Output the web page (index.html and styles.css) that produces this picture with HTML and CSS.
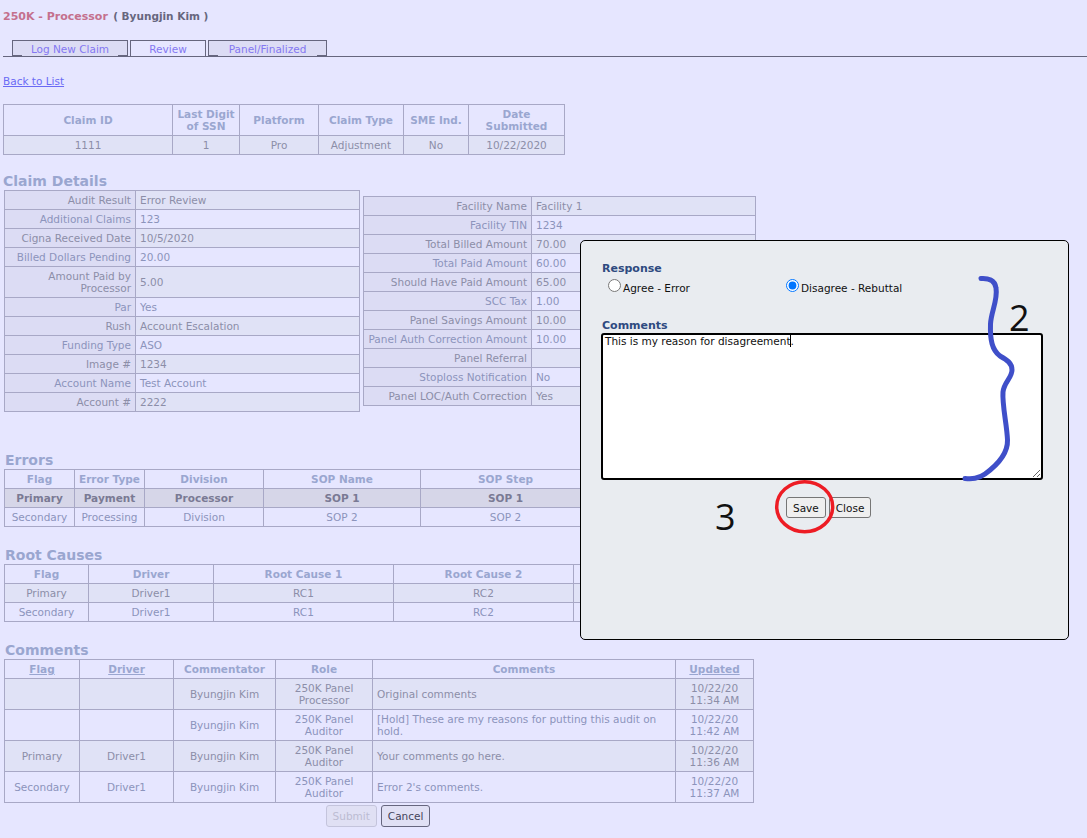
FILE: index.html
```html
<!DOCTYPE html>
<html lang="en">
<head>
    <meta charset="UTF-8">
    <title>250K - Processor</title>
    <link rel="stylesheet" href="styles.css">
</head>
<body>

    <div class="page-title">
        <span class="app-name">250K - Processor</span>
        <span class="user-name">( Byungjin Kim )</span>
    </div>

    <!-- Tabs -->
    <div class="tabs">
        <a class="tab tab-log" href="#"><span>Log New Claim</span></a>
        <a class="tab tab-review active" href="#"><span>Review</span></a>
        <a class="tab tab-panel" href="#"><span>Panel/Finalized</span></a>
    </div>

    <a class="back-link" href="#">Back to List</a>

    <!-- Summary -->
    <table class="grid summary">
        <colgroup>
            <col class="s1"><col class="s2"><col class="s3"><col class="s4"><col class="s5"><col class="s6">
        </colgroup>
        <tr class="head-tall">
            <th>Claim ID</th><th>Last Digit<br>of SSN</th><th>Platform</th><th>Claim Type</th><th>SME Ind.</th><th>Date<br>Submitted</th>
        </tr>
        <tr class="alt">
            <td>1111</td><td>1</td><td>Pro</td><td>Adjustment</td><td>No</td><td>10/22/2020</td>
        </tr>
    </table>

    <h2 class="section-title details-title">Claim Details</h2>
    <div class="details">
        <table class="grid form-table left-form">
            <colgroup><col class="fl1"><col class="fl2"></colgroup>
            <tr class="alt"><th>Audit Result</th><td>Error Review</td></tr>
            <tr><th>Additional Claims</th><td>123</td></tr>
            <tr class="alt"><th>Cigna Received Date</th><td>10/5/2020</td></tr>
            <tr><th>Billed Dollars Pending</th><td>20.00</td></tr>
            <tr class="alt"><th>Amount Paid by Processor</th><td>5.00</td></tr>
            <tr><th>Par</th><td>Yes</td></tr>
            <tr class="alt"><th>Rush</th><td>Account Escalation</td></tr>
            <tr><th>Funding Type</th><td>ASO</td></tr>
            <tr class="alt"><th>Image #</th><td>1234</td></tr>
            <tr><th>Account Name</th><td>Test Account</td></tr>
            <tr class="alt"><th>Account #</th><td>2222</td></tr>
        </table>
        <table class="grid form-table right-form">
            <colgroup><col class="fr1"><col class="fr2"></colgroup>
            <tr class="alt"><th>Facility Name</th><td>Facility 1</td></tr>
            <tr><th>Facility TIN</th><td>1234</td></tr>
            <tr class="alt"><th>Total Billed Amount</th><td>70.00</td></tr>
            <tr><th>Total Paid Amount</th><td>60.00</td></tr>
            <tr class="alt"><th>Should Have Paid Amount</th><td>65.00</td></tr>
            <tr><th>SCC Tax</th><td>1.00</td></tr>
            <tr class="alt"><th>Panel Savings Amount</th><td>10.00</td></tr>
            <tr><th>Panel Auth Correction Amount</th><td>10.00</td></tr>
            <tr class="alt"><th>Panel Referral</th><td></td></tr>
            <tr><th>Stoploss Notification</th><td>No</td></tr>
            <tr class="alt"><th>Panel LOC/Auth Correction</th><td>Yes</td></tr>
        </table>
    </div>

    <h2 class="section-title errors-title">Errors</h2>
    <table class="grid errors">
        <colgroup>
            <col class="e1"><col class="e2"><col class="e3"><col class="e4"><col class="e5"><col class="e6">
        </colgroup>
        <tr><th>Flag</th><th>Error Type</th><th>Division</th><th>SOP Name</th><th>SOP Step</th><th>Amount</th></tr>
        <tr class="selected"><td>Primary</td><td>Payment</td><td>Processor</td><td>SOP 1</td><td>SOP 1</td><td>10.00</td></tr>
        <tr><td>Secondary</td><td>Processing</td><td>Division</td><td>SOP 2</td><td>SOP 2</td><td>5.00</td></tr>
    </table>

    <h2 class="section-title causes-title">Root Causes</h2>
    <table class="grid causes">
        <colgroup>
            <col class="r1"><col class="r2"><col class="r3"><col class="r4"><col class="r5">
        </colgroup>
        <tr><th>Flag</th><th>Driver</th><th>Root Cause 1</th><th>Root Cause 2</th><th>Root Cause 3</th></tr>
        <tr class="alt"><td>Primary</td><td>Driver1</td><td>RC1</td><td>RC2</td><td>RC3</td></tr>
        <tr><td>Secondary</td><td>Driver1</td><td>RC1</td><td>RC2</td><td>RC3</td></tr>
    </table>

    <h2 class="section-title comments-title">Comments</h2>
    <table class="grid comments">
        <colgroup>
            <col class="c1"><col class="c2"><col class="c3"><col class="c4"><col class="c5"><col class="c6">
        </colgroup>
        <tr class="comments-head">
            <th><a href="#">Flag</a></th><th><a href="#">Driver</a></th><th>Commentator</th><th>Role</th><th>Comments</th><th><a href="#">Updated</a></th>
        </tr>
        <tr class="alt">
            <td></td><td></td><td>Byungjin Kim</td><td>250K Panel<br>Processor</td><td class="text-cell">Original comments</td><td>10/22/20<br>11:34 AM</td>
        </tr>
        <tr>
            <td></td><td></td><td>Byungjin Kim</td><td>250K Panel<br>Auditor</td><td class="text-cell">[Hold] These are my reasons for putting this audit on hold.</td><td>10/22/20<br>11:42 AM</td>
        </tr>
        <tr class="alt">
            <td>Primary</td><td>Driver1</td><td>Byungjin Kim</td><td>250K Panel<br>Auditor</td><td class="text-cell">Your comments go here.</td><td>10/22/20<br>11:36 AM</td>
        </tr>
        <tr>
            <td>Secondary</td><td>Driver1</td><td>Byungjin Kim</td><td>250K Panel<br>Auditor</td><td class="text-cell">Error 2's comments.</td><td>10/22/20<br>11:37 AM</td>
        </tr>
    </table>

    <div class="page-actions">
        <button class="page-btn" disabled>Submit</button>
        <button class="page-btn">Cancel</button>
    </div>

    <!-- Response Modal -->
    <div class="modal">
        <div class="modal-label">Response</div>
        <div class="radio-row">
            <label class="radio-item"><input type="radio" name="response"> Agree - Error</label>
            <label class="radio-item"><input type="radio" name="response" checked> Disagree - Rebuttal</label>
        </div>
        <div class="modal-label comments-label">Comments</div>
        <textarea class="modal-text">This is my reason for disagreement.</textarea>
        <div class="modal-actions">
            <button class="modal-btn">Save</button>
            <button class="modal-btn">Close</button>
        </div>
    </div>

    <!-- Hand drawn markup on top of the screenshot -->
    <svg class="markup" width="1087" height="838" viewBox="0 0 1087 838">
        <path d="M790.5 335V347" stroke="#000" stroke-width="1" fill="none"/>
        <path d="M981 278.5C988 278 995 280 996 288C998 300 991 312 990.5 324C990 340 992 350 1000 356C1007 360 1012 363 1012 370C1012 378 1004 382 1003 392C1002 405 1007 425 1007.500 440C1008 455 996 466 985 474C978 479 972 479 965 478.500" stroke="#3f4fc9" stroke-width="5" stroke-linecap="round" fill="none"/>
        <ellipse cx="804.700" cy="506.700" rx="28" ry="25" stroke="#ed1c24" stroke-width="3.500" fill="none"/>
        <text class="markup-num" x="1009" y="331">2</text>
        <text class="markup-num" x="715" y="530">3</text>
    </svg>

</body>
</html>
```

FILE: styles.css
```css
html {
    overflow: hidden;
}

body {
    font-family: "DejaVu Sans", Verdana, sans-serif;
    font-size: 10.5px;
    margin: 0;
    padding: 0;
    height: 838px;
    position: relative;
    overflow: hidden;
    background-color: #e6e6ff;
    color: #8c8ea8;
}

/* Header */
.page-title {
    height: 30px;
    padding: 9px 0 0 3px;
    box-sizing: border-box;
    line-height: 14px;
}

.app-name {
    font-size: 11px;
    font-weight: bold;
    color: #c4708e;
}

.user-name {
    margin-left: 2px;
    font-weight: bold;
    color: #66667e;
}

/* Tabs */
.tabs {
    display: flex;
    gap: 2px;
    height: 16px;
    margin: 10px 0 0 3px;
    padding-left: 9px;
    border-bottom: 1px solid #66667e;
}

.tab {
    display: block;
    height: 16px;
    box-sizing: border-box;
    border: 1px solid #66667e;
    background-color: #dcdcf4;
    color: #8478f2;
    text-align: center;
    text-decoration: none;
    line-height: 16px;
}

.tab span {
    display: block;
    height: 15px;
    margin: 0 9px;
    background-color: #dcdcf4;
}

.tab-log {
    width: 116px;
}

.tab-review {
    width: 76px;
}

.tab-panel {
    width: 119px;
}

.tab.active {
    border-bottom: none;
}

.tab.active,
.tab.active span {
    background-color: #e6e6ff;
}

.back-link {
    display: block;
    margin: 17px 0 0 3px;
    width: 80px;
    white-space: nowrap;
    line-height: 14px;
    color: #6a6af5;
}

/* Tables */
.grid {
    border-collapse: collapse;
    table-layout: fixed;
}

.grid th,
.grid td {
    border: 1px solid #a8a8c6;
    padding: 3px 4px;
    height: 19px;
    line-height: 12px;
    text-align: center;
    font-weight: normal;
    box-sizing: border-box;
}

.grid th {
    font-weight: bold;
    color: #9aa6d0;
}

.grid th a {
    color: inherit;
}

.grid .alt {
    background-color: #e0e2f6;
}

.grid tr:not(.alt) td {
    color: #8c94bc;
}

.grid .selected {
    background-color: #d6d6e8;
}

.grid tr.selected td {
    font-weight: bold;
    color: #7a7a94;
}

.summary {
    margin: 16px 0 0 3px;
    width: 561px;
}

.summary .head-tall th {
    height: 31px;
}

.s1 { width: 169px; }
.s2 { width: 67px; }
.s3 { width: 79px; }
.s4 { width: 85px; }
.s5 { width: 65px; }
.s6 { width: 96px; }

.section-title {
    margin: 0 0 0 3px;
    font-size: 14px;
    line-height: 18px;
    font-weight: bold;
    color: #9aa6d0;
}

.details-title {
    margin-top: 17px;
}

.errors-title {
    margin: 39px 0 0 5px;
}

.causes-title {
    margin: 19px 0 0 5px;
}

.comments-title {
    margin: 19px 0 0 5px;
}

/* Claim details */
.details {
    display: flex;
    align-items: flex-start;
    gap: 3px;
    margin: 0 0 0 4px;
}

.form-table th {
    font-weight: normal;
    text-align: right;
    background-color: #dcdcf4;
    color: #8c94bc;
}

.form-table .alt th {
    color: #8c8ea8;
}

.form-table td {
    text-align: left;
}

.left-form {
    width: 355px;
}

.fl1 { width: 131px; }
.fl2 { width: 224px; }

.right-form {
    width: 392px;
    margin-top: 6px;
}

.fr1 { width: 168px; }
.fr2 { width: 224px; }

.errors {
    margin-left: 4px;
    width: 749px;
}

.e1 { width: 70px; }
.e2 { width: 70px; }
.e3 { width: 119px; }
.e4 { width: 157px; }
.e5 { width: 170px; }
.e6 { width: 163px; }

.causes {
    margin-left: 4px;
    width: 749px;
}

.r1 { width: 84px; }
.r2 { width: 125px; }
.r3 { width: 180px; }
.r4 { width: 180px; }
.r5 { width: 180px; }

.comments {
    margin-left: 4px;
    width: 749px;
}

.c1 { width: 75px; }
.c2 { width: 94px; }
.c3 { width: 102px; }
.c4 { width: 97px; }
.c5 { width: 303px; }
.c6 { width: 78px; }

.comments td {
    height: 31px;
}

.grid .text-cell {
    text-align: left;
}

.page-actions {
    display: flex;
    justify-content: center;
    gap: 4px;
    width: 756px;
    margin-top: 2px;
}

.page-btn {
    font-family: inherit;
    font-size: 10.5px;
    height: 22px;
    padding: 0 6px;
    background-color: #e0e0f4;
    border: 1px solid #66667e;
    border-radius: 3px;
    color: #44445a;
}

.page-btn:disabled {
    border-color: #c4c4dc;
    color: #bcbcd2;
}

/* Modal */
.modal {
    position: absolute;
    left: 580px;
    top: 240px;
    width: 489px;
    height: 400px;
    box-sizing: border-box;
    padding: 21px 25px 0 21px;
    background-color: #e9ecf0;
    border: 1px solid #000;
    border-radius: 5px;
    color: #111;
}

.modal-label {
    font-size: 11px;
    font-weight: bold;
    line-height: 13px;
    color: #2e4a80;
}

.radio-row {
    display: flex;
    margin: 6px 0 0 6px;
}

.radio-item {
    display: flex;
    align-items: center;
    width: 178px;
    line-height: 14px;
}

.radio-item input {
    margin: 0 2px 0 0;
    position: relative;
    top: -3px;
}

.comments-label {
    margin-top: 24px;
}

.modal-text {
    display: block;
    width: 442px;
    height: 147px;
    box-sizing: border-box;
    margin: 1px 0 0 -1px;
    padding: 0 2px;
    border: 2px solid #000;
    border-radius: 3px;
    background-color: #fff;
    font-family: inherit;
    font-size: 10.5px;
    line-height: 13px;
    color: #111;
    outline: none;
}

.modal-actions {
    display: flex;
    gap: 3px;
    margin: 17px 0 0 184px;
}

.modal-btn {
    font-family: inherit;
    font-size: 10.5px;
    height: 21px;
    padding: 0 6px;
    background-color: #efefef;
    border: 1px solid #767676;
    border-radius: 3px;
    color: #111;
}

/* Markup layer */
.markup {
    position: absolute;
    left: 0;
    top: 0;
    pointer-events: none;
}

.markup-num {
    font-family: "Open Sans", sans-serif;
    font-size: 36px;
    fill: #111;
}
```
